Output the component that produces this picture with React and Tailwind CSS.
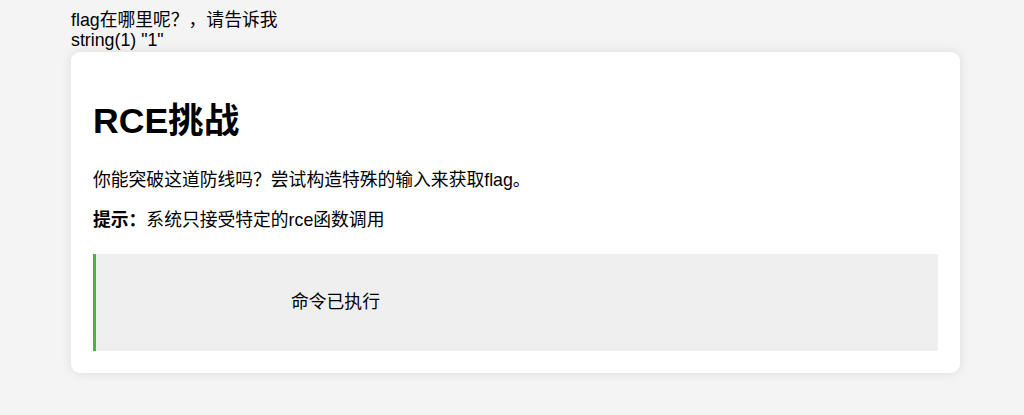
export default function App() {
  return (
    <div className="min-h-screen bg-[#f4f4f4] font-['Liberation_Sans','Noto_Sans_CJK_SC',sans-serif] text-black">
      <div className="ml-[71px] w-[889px] pt-[10px]">
        <div className="text-[17.8px] leading-[20px]">
          flag在哪里呢？，请告诉我
          <br />
          string(1) "1"
        </div>
        <div className="mt-[1.5px] rounded-[9px] bg-white px-[22px] pb-[22px] pt-[49px] shadow-[0_0_11px_rgba(0,0,0,0.1)]">
          <h1 className="text-[35.6px] font-bold leading-[40px]">RCE挑战</h1>
          <p className="mt-[28px] text-[17.8px] leading-[23px]">
            你能突破这道防线吗？尝试构造特殊的输入来获取flag。
          </p>
          <p className="mt-[17.5px] text-[17.8px] leading-[23px]">
            <strong className="font-bold">提示：</strong>系统只接受特定的rce函数调用
          </p>
          <div className="mt-[22px] flex h-[97px] items-center border-l-[3px] border-[#4caf50] bg-[#efefef] pl-[195px] text-[17.8px] leading-[23px]">
            命令已执行
          </div>
        </div>
      </div>
    </div>
  );
}
